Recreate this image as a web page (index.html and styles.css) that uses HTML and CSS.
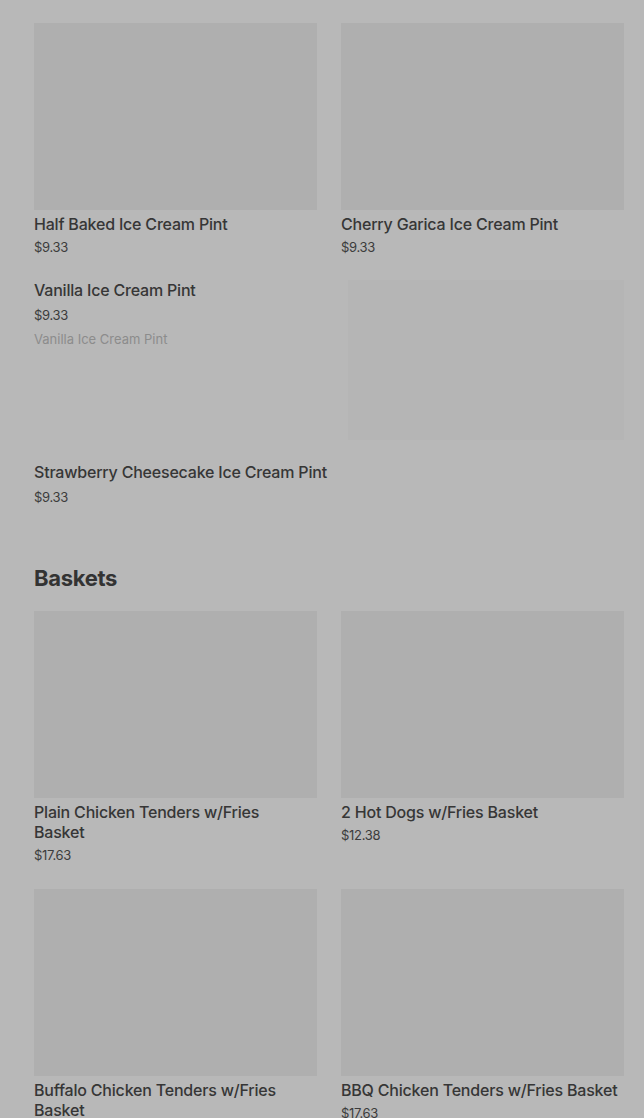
FILE: index.html
```html
<!DOCTYPE html>
<html>
<head>
<meta charset="utf-8">
<link rel="stylesheet" href="styles.css">
</head>
<body>
<main class="page">
  <section class="grid">
    <div class="card">
      <div class="thumb"></div>
      <div class="title">Half Baked Ice Cream Pint</div>
      <div class="price">$9.33</div>
    </div>
    <div class="card">
      <div class="thumb"></div>
      <div class="title">Cherry Garica Ice Cream Pint</div>
      <div class="price">$9.33</div>
    </div>
  </section>

  <div class="row">
    <div class="row-text">
      <div class="title">Vanilla Ice Cream Pint</div>
      <div class="price price-row">$9.33</div>
      <div class="desc">Vanilla Ice Cream Pint</div>
    </div>
    <div class="row-thumb"></div>
  </div>

  <div class="row row-plain">
    <div class="row-text">
      <div class="title">Strawberry Cheesecake Ice Cream Pint</div>
      <div class="price price-row">$9.33</div>
    </div>
  </div>

  <h2 class="heading">Baskets</h2>

  <section class="grid">
    <div class="card">
      <div class="thumb"></div>
      <div class="title">Plain Chicken Tenders w/Fries Basket</div>
      <div class="price">$17.63</div>
    </div>
    <div class="card">
      <div class="thumb"></div>
      <div class="title">2 Hot Dogs w/Fries Basket</div>
      <div class="price">$12.38</div>
    </div>
    <div class="card">
      <div class="thumb"></div>
      <div class="title">Buffalo Chicken Tenders w/Fries Basket</div>
      <div class="price">$17.63</div>
    </div>
    <div class="card">
      <div class="thumb"></div>
      <div class="title">BBQ Chicken Tenders w/Fries Basket</div>
      <div class="price">$17.63</div>
    </div>
  </section>
</main>
</body>
</html>
```

FILE: styles.css
```css
* { box-sizing: border-box; }

html, body {
  margin: 0;
  padding: 0;
  background: #b8b8b8;
  height: 1118px;
  overflow: hidden;
}

body {
  font-family: Inter, "Noto Sans", "Liberation Sans", sans-serif;
  color: #363636;
}

.page {
  padding: 23px 20px 0 34px;
}

.grid {
  display: grid;
  grid-template-columns: 283px 283px;
  column-gap: 24px;
  row-gap: 25px;
}

.thumb {
  height: 187px;
  background: #afafaf;
  margin-bottom: 4px;
}

.title {
  font-size: 16px;
  line-height: 20px;
  font-weight: 500;
  color: #363636;
  letter-spacing: -0.2px;
}

.card .title {
  max-width: 278px;
}

.price {
  font-size: 13px;
  line-height: 18px;
  margin-top: 4px;
  color: #3c3c3c;
  letter-spacing: -0.3px;
}

.row {
  display: flex;
  justify-content: space-between;
  margin-top: 24px;
}

.row-text {
  display: flex;
  flex-direction: column;
}

.price-row {
  margin-top: 6px;
}

.desc {
  font-size: 13px;
  line-height: 18px;
  margin-top: 6px;
  color: #8c8c8c;
}

.row-thumb {
  width: 276px;
  height: 160px;
  background: #b5b5b5;
}

.row-plain {
  margin-top: 22px;
}

.heading {
  margin: 56px 0 17px;
  font-size: 22px;
  line-height: 32px;
  font-weight: 700;
  color: #333333;
  letter-spacing: -0.3px;
}
```
